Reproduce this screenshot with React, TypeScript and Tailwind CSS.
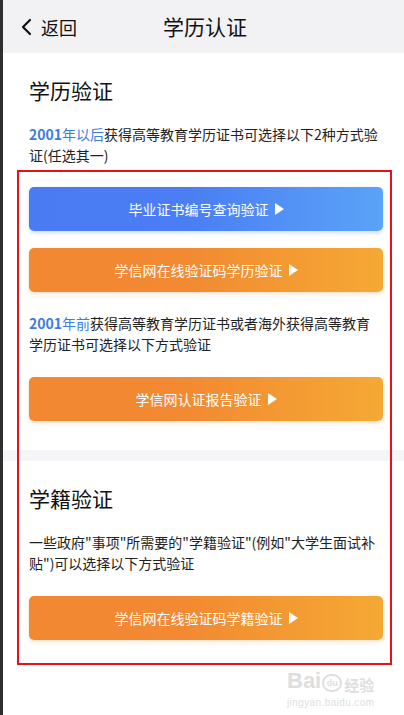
import React from "react";

const font = { fontFamily: '"Noto Sans CJK SC", "Noto Sans", sans-serif' };

function Tri() {
  return (
    <svg width="9" height="12" viewBox="0 0 9 12" className="ml-[6px] inline-block">
      <path d="M0 0 L9 6 L0 12 Z" fill="#ffffff" />
    </svg>
  );
}

function Btn({ label, kind }: { label: string; kind: "blue" | "orange" }) {
  const cls =
    kind === "blue"
      ? "bg-[linear-gradient(90deg,#4a7bf3_0%,#4a7ef3_45%,#5aa3f8_100%)] shadow-[0_2px_4px_rgba(74,123,243,0.25)]"
      : "bg-[linear-gradient(90deg,#f28832_0%,#f28a32_45%,#f5a934_100%)] shadow-[0_2px_4px_rgba(242,136,50,0.25)]";
  return (
    <div
      className={`flex h-[44px] w-full items-center justify-center rounded-[5px] text-[14px] text-white ${cls}`}
    >
      <span className="flex items-center leading-none">
        {label}
        <Tri />
      </span>
    </div>
  );
}

export default function App() {
  return (
    <div className="relative flex h-[715px] w-[404px] overflow-hidden bg-white" style={font}>
      <div className="w-[3px] shrink-0 bg-[#2e2e2e]" />
      <div className="flex flex-1 flex-col">
        {/* header */}
        <div className="flex h-[53px] shrink-0 items-center bg-[#f2f2f4] pl-[17px] text-[#111]">
          <div className="flex w-[120px] items-center">
            <svg width="14" height="18" viewBox="0 0 14 18">
              <path d="M10 2 L3 9 L10 16" fill="none" stroke="#111" strokeWidth="2.2" strokeLinecap="round" strokeLinejoin="round" />
            </svg>
            <span className="ml-[7px] text-[18px] leading-none">返回</span>
          </div>
          <div className="ml-[23px] text-[21px] leading-none">学历认证</div>
        </div>

        {/* section 1 */}
        <div className="pl-[26px] pr-[21px] pt-[22px] pb-[29px]">
          <div className="text-[21px] leading-[30px] text-[#111]">学历验证</div>
          <p className="mt-[19px] w-[351px] text-[14px] leading-[21px] text-[#222]">
            <span className="font-bold text-[#3b7de0]">2001</span>
            <span className="text-[#3b7de0]">年以后</span>
            获得高等教育学历证书可选择以下2种方式验证(任选其一)
          </p>
          <div className="mt-[21px]">
            <Btn label="毕业证书编号查询验证" kind="blue" />
          </div>
          <div className="mt-[17px]">
            <Btn label="学信网在线验证码学历验证" kind="orange" />
          </div>
          <p className="mt-[21px] w-[351px] text-[14px] leading-[21px] text-[#222]">
            <span className="font-bold text-[#3b7de0]">2001</span>
            <span className="text-[#3b7de0]">年前</span>
            获得高等教育学历证书或者海外获得高等教育学历证书可选择以下方式验证
          </p>
          <div className="mt-[22px]">
            <Btn label="学信网认证报告验证" kind="orange" />
          </div>
        </div>

        <div className="h-[11px] shrink-0 bg-[#f5f5f7]" />

        {/* section 2 */}
        <div className="pl-[26px] pr-[21px] pt-[22px]">
          <div className="text-[21px] leading-[30px] text-[#111]">学籍验证</div>
          <p className="mt-[19px] w-[351px] text-[14px] leading-[21px] text-[#222]">
            一些政府"事项"所需要的"学籍验证"(例如"大学生面试补贴")可以选择以下方式验证
          </p>
          <div className="mt-[22px]">
            <Btn label="学信网在线验证码学籍验证" kind="orange" />
          </div>
        </div>
      </div>

      {/* red annotation box */}
      <div className="pointer-events-none absolute left-[17px] top-[170px] h-[495px] w-[375px] border-[2.5px] border-[#e8101a]" />

      {/* watermark */}
      <div className="pointer-events-none absolute left-[287px] top-[670px] flex flex-col items-start text-[#dedede]">
        <div className="flex items-end" style={{ fontFamily: '"Liberation Sans", sans-serif' }}>
          <span className="text-[22px] font-bold leading-none">Bai</span>
          <span className="ml-[1px] flex h-[18px] w-[20px] items-center justify-center rounded-full border-2 border-[#dedede] text-[9px] font-bold leading-none">
            du
          </span>
          <span className="ml-[2px] text-[15px] font-bold leading-none" style={font}>经验</span>
        </div>
        <div className="mt-[6px] text-[10px] leading-none tracking-[0.4px]" style={{ fontFamily: '"Liberation Sans", sans-serif' }}>
          jingyan.baidu.com
        </div>
      </div>
    </div>
  );
}
